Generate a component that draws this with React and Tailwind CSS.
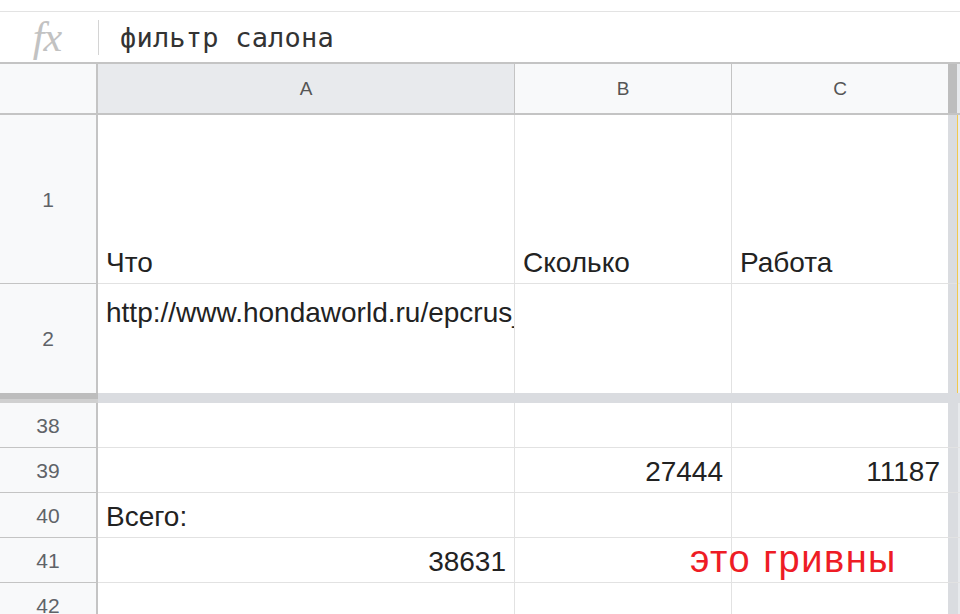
const ROW_HEAD = "w-[98px] shrink-0 border-r-2 border-[#c4c4c4] bg-[#f8f9fa] flex items-center justify-center text-[21px] text-[#5f6368]";

function Cell({ width, align = "left", valign = "end", children, last, className = "" }) {
  const h = align === "right" ? "justify-end pr-[8px]" : "justify-start pl-[8px]";
  const v = valign === "start" ? "items-start pt-[13px]" : "items-end pb-[5px]";
  return (
    <div
      className={`${width} shrink-0 flex ${h} ${v} ${last ? "" : "border-r border-[#e2e2e2]"} ${className}`}
    >
      {children}
    </div>
  );
}

function RightEdge({ header }) {
  return (
    <div className="flex shrink-0">
      <div className={`w-[9px] ${header ? "bg-[#bdbdbd]" : "bg-[#dadce0]"}`} />
      <div className="w-[1px] bg-[#dadce0]" />
      <div className="w-[2px] bg-[#e8eaed]" />
    </div>
  );
}

function Row({ num, height, a, b, c, border = true }) {
  return (
    <div className={`flex ${height} ${border ? "border-b border-[#e2e2e2]" : ""}`}>
      <div className={`${ROW_HEAD} ${border ? "border-b border-b-[#c4c4c4] -mb-px" : ""}`}>{num}</div>
      <Cell width="w-[417px]" {...a}>{a?.text}</Cell>
      <Cell width="w-[217px]" {...b}>{b?.text}</Cell>
      <Cell width="w-[216px]" last {...c}>{c?.text}</Cell>
      <RightEdge />
    </div>
  );
}

export default function App() {
  return (
    <div className="w-[960px] h-[614px] overflow-hidden bg-white text-[#222] font-['Liberation_Sans',Arial,sans-serif] text-[28px] leading-[31px]">
      <div className="h-[12px] border-b border-[#e3e3e3]" />

      {/* formula bar */}
      <div className="h-[50px] flex items-center">
        <div className="w-[98px] flex items-center justify-center pr-[4px] font-['Liberation_Serif',serif] italic text-[42px] leading-none text-[#c2c2c2] tracking-[-1px]">
          fx
        </div>
        <div className="w-px h-[35px] bg-[#d4d4d4]" />
        <div className="pl-[21px] font-['DejaVu_Sans_Mono',monospace] text-[27px] leading-none text-[#333] tracking-[0.2px]">
          фильтр салона
        </div>
      </div>

      {/* column headers */}
      <div className="flex h-[53px] border-y-2 border-[#c4c4c4] text-[19px] text-[#555]">
        <div className="w-[98px] shrink-0 border-r-2 border-[#c4c4c4] bg-[#f8f9fa]" />
        <div className="w-[417px] shrink-0 border-r border-[#c4c4c4] bg-[#e8eaed] flex items-center justify-center">A</div>
        <div className="w-[217px] shrink-0 border-r border-[#c4c4c4] bg-[#f8f9fa] flex items-center justify-center">B</div>
        <div className="w-[216px] shrink-0 bg-[#f8f9fa] flex items-center justify-center">C</div>
        <div className="flex shrink-0">
          <div className="w-[9px] bg-[#bdbdbd]" />
          <div className="w-[3px] bg-[#e8eaed]" />
        </div>
      </div>

      {/* frozen rows */}
      <div className="relative">
        <Row num="1" height="h-[169px]" a={{ text: "Что" }} b={{ text: "Сколько" }} c={{ text: "Работа" }} />
        <Row
          num="2"
          height="h-[109px]"
          border={false}
          a={{ valign: "start", className: "overflow-hidden", text: <span className="whitespace-nowrap">http://www.hondaworld.ru/epcrus_</span> }}
        />
        <div className="absolute right-[2px] top-0 h-[278px] w-px bg-[#f2c94c]" />
      </div>

      {/* freeze divider */}
      <div className="flex h-[10px]">
        <div className="w-[98px] shrink-0 flex flex-col">
          <div className="h-[6px] bg-[#bdbdbd]" />
          <div className="flex-1 bg-[#d0d0d0]" />
        </div>
        <div className="flex-1 bg-[#dadce0]" />
      </div>

      <Row num="38" height="h-[45px]" />
      <Row num="39" height="h-[45px]" b={{ align: "right", text: "27444" }} c={{ align: "right", text: "11187" }} />
      <Row num="40" height="h-[45px]" a={{ text: "Всего:" }} />
      <Row
        num="41"
        height="h-[45px]"
        a={{ align: "right", text: "38631" }}
        b={{
          className: "relative z-10 overflow-visible !pb-[1px]",
          text: (
            <span className="whitespace-nowrap pl-[167px] text-[38px] leading-[44px] tracking-[1.5px] text-[#ee1c25]">это гривны</span>
          ),
        }}
      />
      <Row num="42" height="h-[45px]" />
    </div>
  );
}
